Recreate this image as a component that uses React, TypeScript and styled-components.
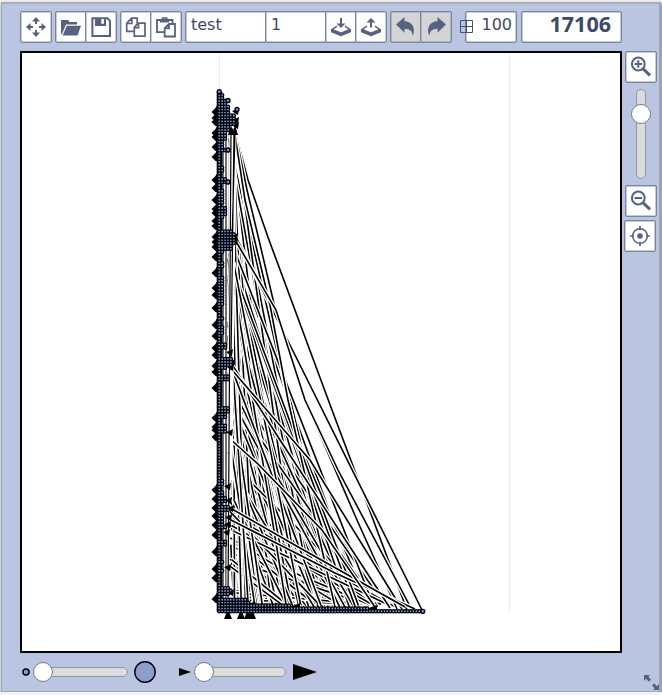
import React from "react";
import styled, { createGlobalStyle, css } from "styled-components";

const ink = "#55637e";
const edge = "#7884a0";

const Global = createGlobalStyle`
  * { box-sizing: border-box; }
  body { margin: 0; background: #f4f4f4; overflow: hidden; font-family: "DejaVu Sans", sans-serif; }
`;

const Panel = styled.main`
  width: 660px;
  height: 690px;
  margin: 2px 1px 0;
  padding: 7px 0 0 18px;
  background: #bac6e1;
  border: 1px solid #9da7b9;
  border-top: 2px solid #a8b0bd;
  border-right: 2px solid #98a4bf;
  box-shadow: 1px 2px 4px #666;
`;

const Toolbar = styled.header`
  display: flex;
  width: 602px;
  height: 32px;
  margin-bottom: 8px;
`;

const Group = styled.div<{ $gap?: number }>`
  display: flex;
  margin-right: ${(p) => p.$gap ?? 3}px;
`;

const box = css`
  border: 1px solid ${edge};
  border-radius: 2px;
  background: #fff;
  box-shadow: inset 0 0 0 0.5px #8f99b2;
  color: #3d4965;
`;

const IconButton = styled.button<{ $off?: boolean }>`
  ${box}
  display: grid;
  flex: none;
  place-items: center;
  width: 32px;
  height: 32px;
  padding: 0;
  background: ${(p) => (p.$off ? "#d4d4d4" : "#fff")};
  & + & { margin-left: -2px; }
  svg { display: block; }
`;

const Field = styled.div<{ $w: number }>`
  ${box}
  width: ${(p) => p.$w}px;
  height: 32px;
  padding: 2px 0 0 5px;
  font-size: 16px;
  line-height: 21px;
  & + &, & + button { margin-left: -2px; }
`;

const GridField = styled(Field)`
  display: flex;
  justify-content: flex-end;
  align-items: flex-start;
  gap: 8px;
  padding: 2px 4px 0 0;
  svg { flex: none; margin-top: 6px; }
`;

const Counter = styled(Field)`
  padding: 0 10px 0 0;
  text-align: right;
  font: bold 21.5px/24px "Open Sans", sans-serif;
`;

const Middle = styled.div`
  display: flex;
  gap: 3px;
`;

const Canvas = styled.div`
  width: 602px;
  height: 602px;
  border: 2px solid #000;
  background: #fff;
  svg { display: block; }
`;

const Side = styled.aside`
  display: flex;
  flex-direction: column;
  align-items: center;
  gap: 3px;
  width: 32px;
`;

const Track = styled.div<{ $vertical?: boolean; $w?: number }>`
  display: flex;
  flex-direction: ${(p) => (p.$vertical ? "column" : "row")};
  align-items: center;
  flex: none;
  width: ${(p) => (p.$vertical ? 10 : p.$w)}px;
  height: ${(p) => (p.$vertical ? 90 : 10)}px;
  margin: ${(p) => (p.$vertical ? "3px 0" : "0")};
  padding: ${(p) => (p.$vertical ? "14px 0 0" : "0")};
  border: 1px solid #9197a5;
  border-radius: 6px;
  background: #dcdcdc;
`;

const Knob = styled.i<{ $shift?: number }>`
  flex: none;
  width: 20px;
  height: 20px;
  margin-left: ${(p) => p.$shift ?? 0}px;
  border: 1px solid #747b8c;
  border-radius: 50%;
  background: #fff;
`;

const Footer = styled.footer`
  display: flex;
  align-items: center;
  height: 38px;
  padding-left: 2px;
`;

const Shape = styled.svg<{ $l?: number }>`
  flex: none;
  margin-left: ${(p) => p.$l ?? 0}px;
`;

const Grip = styled(Shape)`
  align-self: flex-end;
`;

// Icons share a 24px drawing area.
const Icon = ({ children }: { children: React.ReactNode }) => (
  <svg width="24" height="24" viewBox="0 0 24 24" fill="none" stroke={ink} strokeWidth="2">{children}</svg>
);

const MoveIcon = () => (
  <Icon>
    <path d="M12 5v4M12 15v4M5 12h4M15 12h4" />
    <path fill={ink} stroke="none" d="m12 2 4 4.5H8ZM12 22l4-4.5H8ZM2 12l4.5-4v8ZM22 12l-4.5-4v8Z" />
  </Icon>
);
const OpenIcon = () => (
  <Icon><path fill={ink} stroke="none" d="M2 19V5h7l1.5 2H18v2.5H7L3 19ZM7.8 10.7H22L18.5 20.5H3.6Z" /></Icon>
);
const SaveIcon = () => (
  <Icon>
    <path d="M3.4 3.2h15L21 5.8V21H3.4Z" />
    <path fill={ink} stroke="none" d="M6 3h11v8H6Z" />
    <path fill="#fff" stroke="none" d="M12.3 4h2.6v4.8h-2.6Z" />
  </Icon>
);
const CopyIcon = () => (
  <Icon>
    <path strokeWidth="1.7" d="M10 16.4H2.7V8.3L7.5 3.2h5.7v5M7.8 3.5v5H3M14 8.2h7v13H10.3V12.4ZM14.5 8.2v4.5h-4" />
  </Icon>
);
const PasteIcon = () => (
  <Icon>
    <path strokeWidth="1.8" d="M10 17.2H3V5h15.5v3M15 9h6v12.5H10.7v-8.4ZM15 9v4.3h-4" />
    <path strokeWidth="3" d="M6 6h9" />
    <path strokeWidth="1.6" d="M8.5 5V3h4.2v2" />
  </Icon>
);
const TrayIcon = ({ up }: { up?: boolean }) => (
  <Icon>
    <path strokeWidth="1.5" d="M8 11.2 3 14.5 12 18.3l9-3.8-5-3.3" />
    <path fill={ink} stroke="none" d="M2 14.2 12 18l10-3.8v3L12 21.2 2 17.2Z" />
    <path d={up ? "M12 6v6.5" : "M12 3v7"} />
    <path fill={ink} stroke="none" d={up ? "m12 3 4.5 4.5h-9Z" : "m12 13 4.5-4.5h-9Z"} />
  </Icon>
);
const TurnIcon = ({ redo }: { redo?: boolean }) => (
  <Icon>
    <path
      fill={ink} stroke="none"
      transform={redo ? "matrix(-1 0 0 1 24 0)" : undefined}
      d="M2 9.5 10.5 2v4.2C18 6.5 22 12.5 18.8 21c-.6-5.1-3.1-7.2-8.3-7.3v4Z"
    />
  </Icon>
);
const LensIcon = ({ plus }: { plus?: boolean }) => (
  <Icon>
    <circle cx="9.3" cy="9" r="6.4" strokeWidth="2" />
    <path strokeWidth="2" d={plus ? "M5.5 9h7.6M9.3 5.2v7.6" : "M5.5 9h7.6"} />
    <path strokeWidth="3" d="m14.2 13.8 6.8 6.6" />
  </Icon>
);
const TargetIcon = () => (
  <Icon>
    <circle cx="12" cy="12" r="7.3" strokeWidth="1.5" />
    <circle cx="12" cy="12" r="2.8" fill={ink} stroke="none" />
    <path strokeWidth="1.7" d="M12 2v4M12 18v4M2 12h4M18 12h4" />
  </Icon>
);

const STEP = 2.9;
const X0 = 219.3;
const BASE = 611.3;

function randomFrom(seed: number) {
  let s = seed;
  return () => {
    s = (s * 1664525 + 1013904223) % 4294967296;
    return s / 4294967296;
  };
}

// [first y, last y, columns] of the node column.
const widths: number[][] = [
  [94, 99, 2], [99, 102, 4], [102, 106, 3], [106, 110, 4], [110, 115, 4], [115, 126, 6], [126, 131, 4],
  [131, 141, 3], [141, 148, 2], [148, 151, 4], [167, 173, 2], [177, 180, 3], [180, 183, 4], [190, 204, 2],
  [206, 214, 3], [215, 219, 2], [229, 233, 5], [233, 238, 6], [238, 245, 6], [245, 249, 5], [249, 252, 2],
  [263, 268, 2], [275, 304, 2], [316, 320, 2], [325, 333, 2], [342, 350, 3], [357, 365, 5], [365, 369, 3],
  [375, 380, 4], [408, 413, 4], [414, 419, 3], [424, 434, 3], [478, 485, 2], [490, 497, 2], [497, 502, 3],
  [504, 512, 4], [512, 526, 2], [526, 530, 3], [540, 546, 3], [561, 564, 2], [570, 573, 2], [588, 594, 4],
];
const floors: number[][] = [[0, 71], [1, 52], [2, 25], [3, 11], [4, 10]];
const leftArrows = [
  112, 118, 122, 133, 137, 147, 157, 180, 188, 200, 209, 213, 221, 226, 237, 242, 247, 257, 273, 288, 295,
  308, 325, 336, 348, 355, 366, 372, 388, 418, 427, 430, 437, 490, 499, 508, 516, 525, 535, 552, 569, 578, 599,
];
const rightArrows = [
  [237, 111], [237, 120], [237, 125], [236, 236], [236, 241], [231, 352], [233, 362], [232, 367], [231, 432],
  [229, 486], [230, 500], [232, 508], [230, 517], [229, 524], [228, 532], [229, 567], [232, 592],
];

function buildNodes() {
  const out: number[][] = [];
  for (let i = 0; i < 180; i++) {
    const y = BASE - i * STEP;
    const w = widths.find(([a, b]) => y >= a && y < b);
    const f = floors.find(([r]) => r === i);
    const n = f ? f[1] : w ? w[2] : 1;
    for (let c = 0; c < n; c++) out.push([X0 + c * STEP, y]);
  }
  return out;
}

function buildEdges() {
  const rnd = randomFrom(71);
  const out: number[][] = [];
  const sources = [
    [128, 345, 13], [240, 375, 32], [300, 360, 22], [362, 390, 34], [430, 390, 32], [490, 400, 26],
    [520, 395, 18], [565, 400, 8],
  ];
  for (const [y, far, count] of sources) {
    for (let i = 0; i < count; i++) {
      const t = (i + rnd() * 0.8) / count;
      out.push([228 + rnd() * 7, y + rnd() * 40, 232 + (far - 232) * t, 603 + rnd() * 5]);
    }
  }
  // Mix the drawing order so the white casings interrupt edges below.
  for (let i = out.length - 1; i > 0; i--) {
    const j = Math.floor(rnd() * (i + 1));
    [out[i], out[j]] = [out[j], out[i]];
  }
  return out.map(([a, b, c, d]) => `M${a} ${b}L${c} ${d}`);
}

const longEdges = [
  "M235 131L248 180L269 240L332 410L407 610",
  "M235 131L247 190L259 240L275 308L305 400L357 520L397 609",
  "M234 233L290 345L422 610",
  "M235 135L245 200L270 305L288 400L335 607",
  "M234 238L276 310L305 400L338 470L412 610",
  "M233 366L280 440L390 608",
  "M232 370L310 460L402 609",
  "M231 520L280 545L335 573L415 609",
  "M232 509L300 548L405 607",
  "M229 438L258 464L322 530L375 607",
];

const nodes = buildNodes();
const edges = buildEdges();

const Link = ({ d }: { d: string }) => (
  <>
    <path d={d} stroke="#fff" strokeWidth="4.2" />
    <path d={d} stroke="#000" strokeWidth="1.6" />
  </>
);

const Graph = () => (
  <svg width="598" height="598" viewBox="22 53 598 598" fill="none">
    <path d="M219.5 53V612M509.5 53V612" stroke="#ececec" />
    {edges.map((d) => <Link key={d} d={d} />)}
    {longEdges.map((d) => <Link key={d} d={d} />)}
    <path d="M223 104V600M226 112V600" stroke="#222" strokeWidth="1.3" />
    <path d="M229 130V600" stroke="#aaa" strokeWidth="1" />
    <path d="M231 132 228 600M234 132 231 360M235 134 231 480" stroke="#fff" strokeWidth="3" />
    <path d="M231 132 228 600M234 132 231 360M235 134 232 240" stroke="#000" strokeWidth="1.2" />
    <path d="M219.5 92V612" stroke="#000" strokeWidth="5.6" />
    <path d="M228 135l3-10 3 10ZM232 135l3-10 3 10ZM285 609l15-6v5ZM246 606l9-5 1 5ZM366 609l11-4v5Z" fill="#000" />
    {leftArrows.map((y) => <path key={y} d={`M211.5 ${y}l4-4 1-2 3 1v10l-4-1Z`} fill="#000" />)}
    {rightArrows.map(([x, y]) => <path key={y} d={`M${x + 2} ${y - 3}l-1 7-2-1-4-3 3-1Z`} fill="#000" />)}
    {[228, 241, 248, 252].map((x) => <path key={x} d={`M${x} 609l4 10h-8Z`} fill="#000" />)}
    <g fill="#7b9bdc" stroke="#000" strokeWidth="1.25">
      {nodes.map(([x, y]) => <circle key={`${x},${y}`} cx={x} cy={y} r="1.6" />)}
    </g>
    <g fill="#718fca" stroke="#000" strokeWidth="1.3">
      <circle cx="219.3" cy="91.7" r="2" /><circle cx="228" cy="100.5" r="2" />
      <circle cx="237" cy="109.5" r="2" /><circle cx="228" cy="150" r="2" />
      <circle cx="228" cy="182" r="2" /><circle cx="422.8" cy="611.3" r="2" />
    </g>
  </svg>
);

export default function App() {
  return (
    <>
      <Global />
      <Panel>
        <Toolbar>
          <Group><IconButton><MoveIcon /></IconButton></Group>
          <Group><IconButton><OpenIcon /></IconButton><IconButton><SaveIcon /></IconButton></Group>
          <Group><IconButton><CopyIcon /></IconButton><IconButton><PasteIcon /></IconButton></Group>
          <Group>
            <Field $w={82}>test</Field>
            <Field $w={62}>1</Field>
            <IconButton><TrayIcon /></IconButton>
            <IconButton><TrayIcon up /></IconButton>
          </Group>
          <Group $gap={13}>
            <IconButton $off><TurnIcon /></IconButton>
            <IconButton $off><TurnIcon redo /></IconButton>
          </Group>
          <Group $gap={4}>
            <GridField $w={52}>
              <svg width="13" height="13" viewBox="0 0 13 13" fill="none" stroke="#44506c">
                <path d="M.5.5h12v12H.5ZM6.5.5v12M.5 6.5h12" />
              </svg>
              100
            </GridField>
          </Group>
          <Counter $w={102}>17106</Counter>
        </Toolbar>
        <Middle>
          <Canvas><Graph /></Canvas>
          <Side>
            <IconButton><LensIcon plus /></IconButton>
            <Track $vertical><Knob /></Track>
            <IconButton><LensIcon /></IconButton>
            <IconButton><TargetIcon /></IconButton>
          </Side>
        </Middle>
        <Footer>
          <Shape width="8" height="8" viewBox="0 0 8 8">
            <circle cx="4" cy="4" r="3" fill="#8b9fcc" stroke="#000" strokeWidth="1.5" />
          </Shape>
          <Shape as="span" $l={4} />
          <Track $w={94}><Knob $shift={-2} /></Track>
          <Shape $l={6} width="22" height="22" viewBox="0 0 22 22">
            <circle cx="11" cy="11" r="10.2" fill="#8b9fcc" stroke="#000" strokeWidth="1.4" />
          </Shape>
          <Shape $l={23} width="12" height="8" viewBox="0 0 12 8"><path d="M0 0 12 4 0 8Z" /></Shape>
          <Shape as="span" $l={4} />
          <Track $w={91}><Knob $shift={-2} /></Track>
          <Shape $l={7} width="24" height="16" viewBox="0 0 24 16"><path d="M0 0 24 8 0 16Z" /></Shape>
          <Grip $l={327} width="16" height="16" viewBox="0 0 16 16">
            <path fill={ink} d="M0 0h6L4.3 1.7 7 4.4 5 6.8 2 3.8 0 6ZM15 15H9l1.7-1.7L8 10.5 10 8.3l3 3L15 9Z" />
          </Grip>
        </Footer>
      </Panel>
    </>
  );
}
